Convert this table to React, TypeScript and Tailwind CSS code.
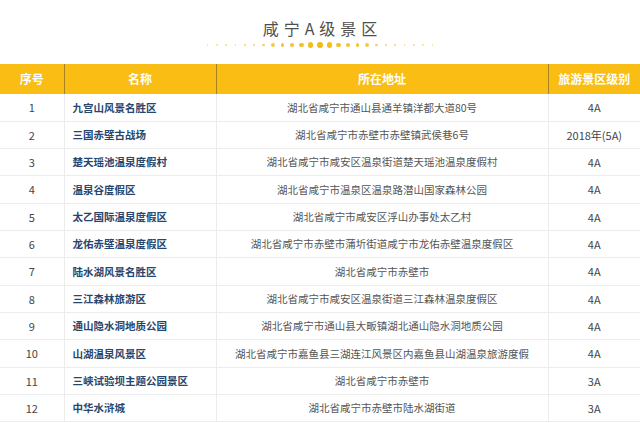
import React from 'react';

type Spot = { no: number; name: string; address: string; level: string };

const SPOTS: Spot[] = [
  { no: 1, name: '九宫山风景名胜区', address: '湖北省咸宁市通山县通羊镇洋都大道80号', level: '4A' },
  { no: 2, name: '三国赤壁古战场', address: '湖北省咸宁市赤壁市赤壁镇武侯巷6号', level: '2018年(5A)' },
  { no: 3, name: '楚天瑶池温泉度假村', address: '湖北省咸宁市咸安区温泉街道楚天瑶池温泉度假村', level: '4A' },
  { no: 4, name: '温泉谷度假区', address: '湖北省咸宁市温泉区温泉路潜山国家森林公园', level: '4A' },
  { no: 5, name: '太乙国际温泉度假区', address: '湖北省咸宁市咸安区浮山办事处太乙村', level: '4A' },
  { no: 6, name: '龙佑赤壁温泉度假区', address: '湖北省咸宁市赤壁市蒲圻街道咸宁市龙佑赤壁温泉度假区', level: '4A' },
  { no: 7, name: '陆水湖风景名胜区', address: '湖北省咸宁市赤壁市', level: '4A' },
  { no: 8, name: '三江森林旅游区', address: '湖北省咸宁市咸安区温泉街道三江森林温泉度假区', level: '4A' },
  { no: 9, name: '通山隐水洞地质公园', address: '湖北省咸宁市通山县大畈镇湖北通山隐水洞地质公园', level: '4A' },
  { no: 10, name: '山湖温泉风景区', address: '湖北省咸宁市嘉鱼县三湖连江风景区内嘉鱼县山湖温泉旅游度假', level: '4A' },
  { no: 11, name: '三峡试验坝主题公园景区', address: '湖北省咸宁市赤壁市', level: '3A' },
  { no: 12, name: '中华水浒城', address: '湖北省咸宁市赤壁市陆水湖街道', level: '3A' },
];

const DOTS = Array.from({ length: 25 }, (_, i) => {
  const t = 1 - Math.abs(i - 12) / 12;
  return { size: 1.6 + 4.6 * t * t, opacity: 0.45 + 0.55 * t };
});

const HEAD = ['序号', '名称', '所在地址', '旅游景区级别'];

export default function App() {
  return (
    <div
      className="w-[640px] h-[423px] overflow-hidden bg-white"
      style={{ fontFamily: '"Noto Sans CJK SC", "Noto Sans", sans-serif' }}
    >
      {/* 标题 */}
      <div className="h-[64px] flex flex-col items-center pt-[17px]">
        <h1 className="text-[16px] leading-[22px] tracking-[5px] pl-[5px] text-[#4f4f4f] font-normal">
          咸宁A级景区
        </h1>
        <div className="flex items-center h-[8px] mt-[2px] gap-[0px]">
          {DOTS.map((d, i) => (
            <div key={i} className="w-[9.4px] flex justify-center">
              <span
                className="block rounded-full bg-[#f1bb12]"
                style={{ width: d.size, height: d.size, opacity: d.opacity }}
              />
            </div>
          ))}
        </div>
      </div>

      {/* 表格 */}
      <table className="w-[640px] table-fixed border-collapse">
        <colgroup>
          <col className="w-[64px]" />
          <col className="w-[152px]" />
          <col className="w-[332px]" />
          <col className="w-[92px]" />
        </colgroup>
        <thead>
          <tr className="h-[30px] bg-[#f9bd14]">
            {HEAD.map((h, i) => (
              <th
                key={h}
                className={
                  'text-white text-[12px] font-bold text-center p-0 whitespace-nowrap ' +
                  (i > 0 ? 'border-l border-[#a88320]' : '')
                }
              >
                {h}
              </th>
            ))}
          </tr>
        </thead>
        <tbody>
          {SPOTS.map((s) => (
            <tr key={s.no} className="h-[27.33px] border-b border-[#ececec]">
              <td className="text-center text-[11px] text-[#444] p-0">{s.no}</td>
              <td className="border-l border-[#ececec] pl-[8px] text-[10.5px] font-bold text-[#27466e] whitespace-nowrap p-0">
                {s.name}
              </td>
              <td className="border-l border-[#ececec] text-center text-[10.5px] text-[#555] whitespace-nowrap overflow-hidden p-0">
                {s.address}
              </td>
              <td className="border-l border-[#ececec] text-center text-[11px] text-[#444] whitespace-nowrap p-0">
                {s.level}
              </td>
            </tr>
          ))}
        </tbody>
      </table>
    </div>
  );
}
